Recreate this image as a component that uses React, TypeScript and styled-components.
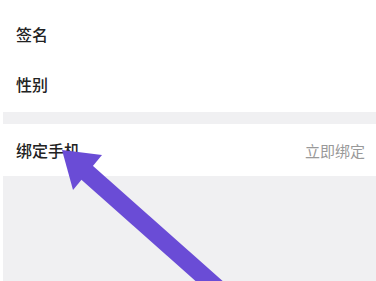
import React from "react";
import styled, { createGlobalStyle } from "styled-components";

const Global = createGlobalStyle`
  html, body { margin: 0; padding: 0; background: #ffffff; }
  body { font-family: "Noto Sans CJK SC", "Noto Sans", sans-serif; }
`;

const Page = styled.div`
  position: relative;
  width: 376px;
  height: 281px;
  overflow: hidden;
  background: #ffffff;
  display: flex;
  flex-direction: column;
  padding-top: 9px;
  box-sizing: border-box;
`;

const Row = styled.div<{ $h: number }>`
  height: ${(p) => p.$h}px;
  display: flex;
  align-items: center;
  justify-content: space-between;
  padding: 0 11px 0 16px;
  flex-shrink: 0;
`;

const Label = styled.span`
  font-size: 16px;
  font-weight: 500;
  color: #222222;
  letter-spacing: 0px;
`;

const Action = styled.span`
  font-size: 15px;
  color: #999999;
`;

const Gap = styled.div`
  height: 3px;
  flex-shrink: 0;
`;

const Band = styled.div<{ $h?: number }>`
  margin-left: 3px;
  background: #f0f0f2;
  flex-shrink: 0;
  ${(p) => (p.$h ? `height: ${p.$h}px;` : "flex: 1;")}
`;

const Arrow = styled.svg`
  position: absolute;
  left: 0;
  top: 0;
  pointer-events: none;
`;

export default function App() {
  return (
    <>
      <Global />
      <Page>
        <Row $h={50}>
          <Label>签名</Label>
        </Row>
        <Row $h={50}>
          <Label>性别</Label>
        </Row>
        <Gap />
        <Band $h={12} />
        <Row $h={52}>
          <Label>绑定手机</Label>
          <Action>立即绑定</Action>
        </Row>
        <Band />
        <Arrow width={376} height={281} viewBox="0 0 376 281">
          <line x1={84} y1={170} x2={226} y2={296} stroke="#6a4cd6" strokeWidth={18} />
          <polygon points="62,150 73,190 102,155" fill="#6a4cd6" />
        </Arrow>
      </Page>
    </>
  );
}
